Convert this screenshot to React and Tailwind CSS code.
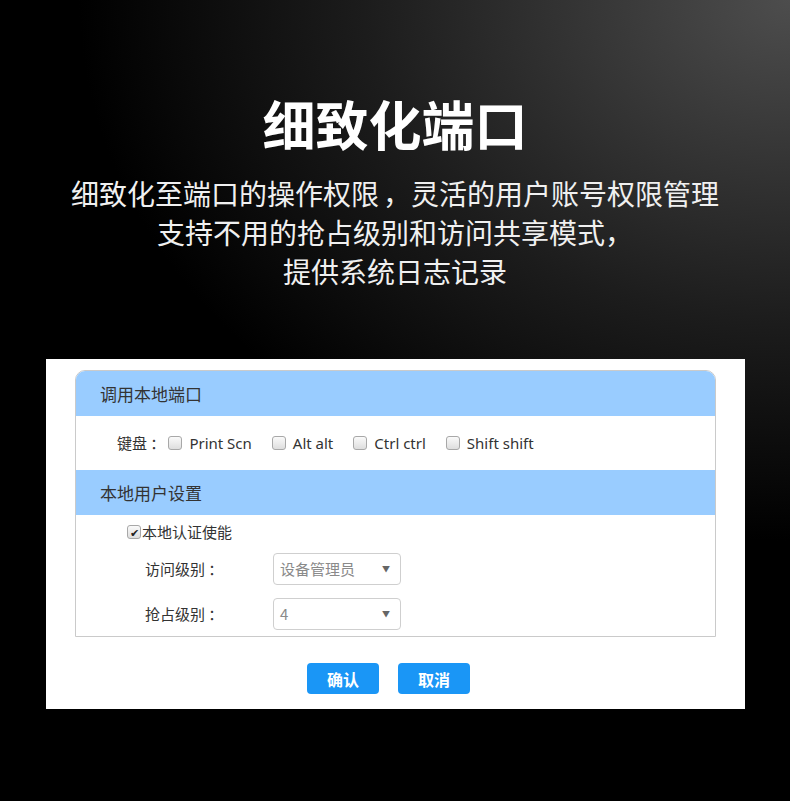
export default function App() {
  const keys = ["Print Scn", "Alt alt", "Ctrl ctrl", "Shift shift"];

  const Box = ({ checked }) => (
    <span className="inline-flex h-[14px] w-[14px] shrink-0 items-center justify-center rounded-[3px] border border-[#a8a8a8] bg-gradient-to-b from-[#fafafa] to-[#dedede] text-[11px] leading-none text-[#222]">
      {checked ? "✔" : null}
    </span>
  );

  const Select = ({ value }) => (
    <div className="flex h-[32px] w-[128px] items-center justify-between rounded-[4px] border border-[#cfcfcf] bg-white pl-[6px] pr-[10px] text-[15px] text-[#8a8a8a]">
      <span>{value}</span>
      <span className="text-[8px] text-[#666]">▼</span>
    </div>
  );

  return (
    <div
      className="flex h-[801px] w-[790px] flex-col items-center bg-[radial-gradient(ellipse_120%_90%_at_100%_0%,#4d4d4d_0%,#1c1c1c_45%,#000_75%)] text-white"
      style={{ fontFamily: '"Noto Sans CJK SC", "Noto Sans", sans-serif' }}
    >
      {/* Heading */}
      <h1 className="pt-[93px] text-[53px] font-bold leading-[60px]">细致化端口</h1>
      <div className="mt-[21px] text-center text-[28px] leading-[39px] text-[#f0f0f0]">
        <p>细致化至端口的操作权限<span className="ml-[4px]">，</span>灵活的用户账号权限管理</p>
        <p>支持不用的抢占级别和访问共享模式，</p>
        <p>提供系统日志记录</p>
      </div>

      {/* Settings panel */}
      <div className="mt-[68px] ml-[46px] h-[350px] w-[699px] self-start bg-white px-[29px] pt-[11px] text-[#333]">
        <div className="overflow-hidden rounded-t-[10px] border border-[#cacaca]">
          <div className="flex h-[45px] items-center bg-[#99ccff] pl-[24px] text-[17px]">调用本地端口</div>
          <div className="flex h-[54px] items-center pl-[41px] text-[15px]">
            <span className="mr-[3px]">键盘 ：</span>
            {keys.map((k, i) => (
              <label key={k} className={`flex items-center gap-[7px] ${i < keys.length - 1 ? "mr-[20px]" : ""}`}>
                <Box />
                <span style={{ fontFamily: '"Noto Sans", sans-serif' }}>{k}</span>
              </label>
            ))}
          </div>
          <div className="flex h-[45px] items-center bg-[#99ccff] pl-[24px] text-[17px]">本地用户设置</div>
          <div className="pb-[6px] pt-[7px] text-[15px]">
            <div className="flex h-[20px] items-center pl-[51px]">
              <Box checked />
              <span className="ml-[1px]">本地认证使能</span>
            </div>
            <div className="mt-[11px] flex items-center pl-[69px]">
              <span className="w-[128px]">访问级别 ：</span>
              <Select value="设备管理员" />
            </div>
            <div className="mt-[13px] flex items-center pl-[69px]">
              <span className="w-[128px]">抢占级别 ：</span>
              <Select value="4" />
            </div>
          </div>
        </div>
        <div className="mt-[26px] flex gap-[19px] pl-[232px]">
          <button className="h-[31px] w-[72px] rounded-[4px] bg-[#1a96f6] text-[16px] font-bold text-white">确认</button>
          <button className="h-[31px] w-[72px] rounded-[4px] bg-[#1a96f6] text-[16px] font-bold text-white">取消</button>
        </div>
      </div>
    </div>
  );
}
